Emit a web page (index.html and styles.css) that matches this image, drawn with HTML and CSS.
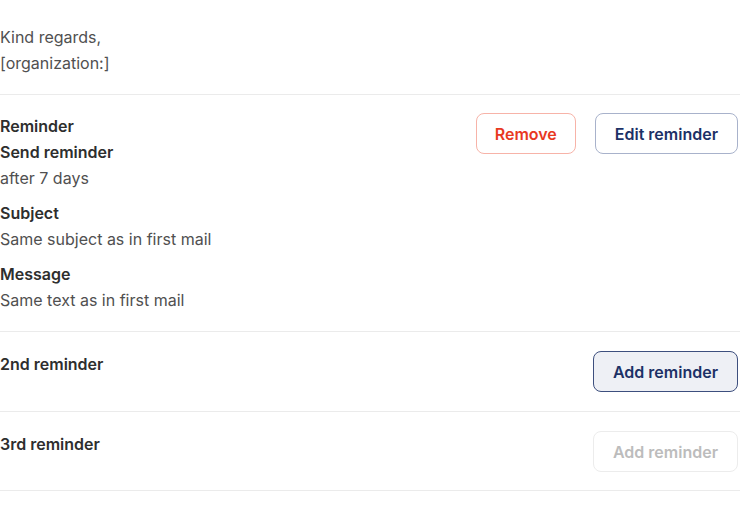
FILE: index.html
```html
<!DOCTYPE html>
<html>
<head>
<meta charset="utf-8">
<link rel="stylesheet" href="styles.css">
</head>
<body>
<div class="page">
  <section class="block intro">
    <p class="text">Kind regards,</p>
    <p class="text">[organization:]</p>
  </section>

  <section class="block row">
    <div class="info">
      <div class="group">
        <p class="label">Reminder</p>
        <p class="label">Send reminder</p>
        <p class="text">after 7 days</p>
      </div>
      <div class="group">
        <p class="label">Subject</p>
        <p class="text">Same subject as in first mail</p>
      </div>
      <div class="group">
        <p class="label">Message</p>
        <p class="text">Same text as in first mail</p>
      </div>
    </div>
    <div class="actions">
      <button class="btn btn-danger">Remove</button>
      <button class="btn btn-outline">Edit reminder</button>
    </div>
  </section>

  <section class="block row simple">
    <p class="label">2nd reminder</p>
    <div class="actions">
      <button class="btn btn-active">Add reminder</button>
    </div>
  </section>

  <section class="block row simple last">
    <p class="label">3rd reminder</p>
    <div class="actions">
      <button class="btn btn-disabled" disabled>Add reminder</button>
    </div>
  </section>
</div>
</body>
</html>
```

FILE: styles.css
```css
* { box-sizing: border-box; }
html, body {
  margin: 0;
  padding: 0;
  background: #ffffff;
}
body {
  font-family: Inter, "Noto Sans", "Liberation Sans", sans-serif;
  font-size: 16px;
  line-height: 26px;
  color: #4d4d4d;
}
.page {
  width: 740px;
}
p { margin: 0; }
.block {
  padding: 18px 2px 18px 0;
  border-bottom: 1px solid #ebebeb;
}
.intro {
  padding-top: 24px;
}
.row {
  display: flex;
  justify-content: space-between;
  align-items: flex-start;
}
.simple {
  padding-top: 19px;
  padding-bottom: 19px;
}
.last {
  padding-bottom: 18px;
}
.text {
  color: #505050;
  font-weight: 400;
}
.label {
  color: #2e2e2e;
  font-weight: 600;
}
.group + .group {
  margin-top: 9px;
}
.actions {
  display: flex;
  gap: 19px;
}
.btn {
  font-family: inherit;
  font-size: 16px;
  font-weight: 600;
  height: 41px;
  padding: 0 19px;
  border-radius: 8px;
  background: #ffffff;
  cursor: pointer;
}
.btn-danger {
  color: #e8391f;
  border: 1px solid #f7b3a8;
  padding: 0 18px;
}
.btn-outline {
  color: #1c3166;
  border: 1px solid #a8b2cb;
}
.btn-active {
  color: #1c3166;
  background: #eef0f5;
  border: 1px solid #3d4f7e;
}
.btn-disabled {
  color: #bcbcbc;
  border: 1px solid #ececec;
  cursor: default;
}
```
